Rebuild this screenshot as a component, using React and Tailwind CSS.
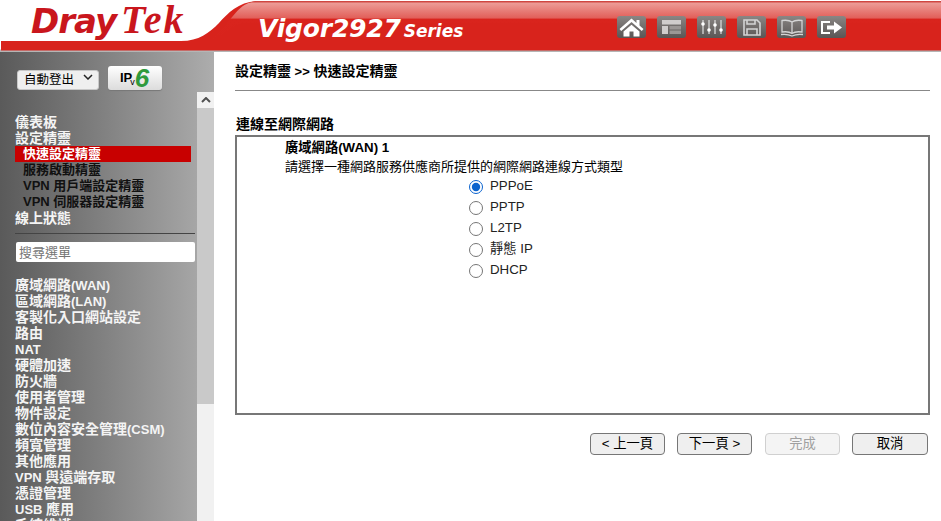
import React from 'react';

const topIcons = [
  // home
  <path key="h" fill="#fff" d="M14.500 2.500 2.500 13l1.700 1.900 10.300-9 10.300 9 1.700-1.900-4-3.500V4h-3v3zM6.500 15.500V20.500h6v-5h4v5h6v-5l-8-6.700z" />,
  // layout
  <g key="l">
    <path fill="#d0cdcc" d="M5 4h19v4.500H5zM5 10h6v8H5z" />
    <path fill="#9b9795" d="M12.500 10H24v3.500H12.500zM12.500 14.500H24V18H12.500z" />
  </g>,
  // sliders
  <g key="s" stroke="#d8d8d8" strokeWidth="1.300" fill="#fff">
    <path d="M6 4v14M12 4v14M18 4v14M24 4v14" />
    <circle cx="6" cy="8" r="1.800" stroke="none" />
    <circle cx="12" cy="14" r="1.800" stroke="none" />
    <circle cx="18" cy="9" r="1.800" stroke="none" />
    <circle cx="24" cy="14" r="1.800" stroke="none" />
  </g>,
  // save
  <g key="d" fill="none" stroke="#d4d4d4" strokeWidth="1.600">
    <path d="M7 4h13l3 3v12H7z" />
    <path d="M10 4v4h8V4M10 19v-6h10v6" />
  </g>,
  // book
  <g key="b" fill="none" stroke="#d4d4d4" strokeWidth="1.300">
    <path d="M15 6c-2-1.500-6-2-10-1.500V16c4-.5 8 0 10 1.500 2-1.500 6-2 10-1.500V4.500C21 4 17 4.500 15 6zM15 6v11.500" />
    <path d="M4 18.500c4-.5 8 0 11 1.500 3-1.500 7-2 11-1.500" />
  </g>,
  // logout
  <g key="o">
    <path fill="none" stroke="#fff" strokeWidth="2" d="M13 6H5v11h8" />
    <path fill="#fff" d="M10 9.500h7V5.500l8 6-8 6v-4h-7z" />
  </g>,
];

const wizardItems = ['服務啟動精靈', 'VPN 用戶端設定精靈', 'VPN 伺服器設定精靈'];
const menuItems = [
  '廣域網路(WAN)', '區域網路(LAN)', '客製化入口網站設定', '路由', 'NAT', '硬體加速', '防火牆', '使用者管理',
  '物件設定', '數位內容安全管理(CSM)', '頻寬管理', '其他應用', 'VPN 與遠端存取', '憑證管理', 'USB 應用', '系統維護',
];
const wanTypes = ['PPPoE', 'PPTP', 'L2TP', '靜態 IP', 'DHCP'];

// latin runs are a point smaller than the chinese next to them
const Mixed = ({ text }) =>
  text.split(/([\x20-\x7e]+)/).map((part, index) =>
    /[\x20-\x7e]/.test(part) ? <span key={index} className="text-[13px]">{part}</span> : part
  );

const Header = () => (
  <div className="relative h-[52px] shrink-0 bg-white">
    {/* red swoosh */}
    <svg className="absolute inset-0" width="941" height="52" viewBox="0 0 941 52">
      <defs>
        <linearGradient id="band" x1="0" y1="0" x2="0" y2="1">
          <stop offset="0" stopColor="#c8302b" />
          <stop offset="0.06" stopColor="#ec9a95" />
          <stop offset="0.42" stopColor="#e2605a" />
          <stop offset="0.46" stopColor="#d9241d" />
          <stop offset="1" stopColor="#d8231c" />
        </linearGradient>
      </defs>
      <path d="M0 49.500h941V52H0z" fill="#b5b5b5" />
      <path d="M1 41h180c18 0 28-8 38-18 9-10 21-22 40-22h682v49.500H1z" fill="#d8231c" />
      <path d="M205 41c8-3 15-10 22-18 9-10 15-22 32-22h682v22H245c-15 0-22 18-40 18z" fill="url(#band)" />
    </svg>
    <div className="relative flex h-full items-start">
      <div className="ml-[31px] flex w-[227px] items-baseline">
        <span className="text-[34px] leading-[40px] font-bold italic tracking-[-1px] text-[#c9161d] [font-family:'DejaVu_Sans',sans-serif]">Dray</span>
        <span className="ml-[5px] text-[40px] leading-[40px] font-bold italic tracking-[2px] text-[#c9161d] [font-family:'Liberation_Serif',serif]">Tek</span>
      </div>
      <div className="mt-[13px] flex w-[359px] items-baseline text-white italic font-bold [font-family:'DejaVu_Sans',sans-serif]">
        <span className="text-[25px] leading-[32px] tracking-[-0.2px]">Vigor2927</span>
        <span className="ml-[3px] text-[17px] leading-[32px]">Series</span>
      </div>
      <div className="mt-[16px] flex gap-[11px]">
        {topIcons.map((icon, index) => (
          <svg key={index} width="29" height="22" viewBox="0 0 29 22" className="rounded-[3px] bg-gradient-to-b from-[#8a8684] to-[#5a5655]">
            {icon}
          </svg>
        ))}
      </div>
    </div>
  </div>
);

const Sidebar = () => (
  <div className="flex w-[214px] shrink-0 flex-col bg-gradient-to-r from-[#5a5a5a] to-[#adadad]">
    <div className="flex h-[40px] shrink-0 items-start pt-[15px] pl-[17px]">
      <div className="relative h-[20px] w-[82px]">
        <select className="h-full w-full appearance-none rounded-[3px] border border-[#c8c8c8] bg-[#efefef] pl-[6px] text-[12.500px] text-black">
          <option>自動登出</option>
        </select>
        <svg className="pointer-events-none absolute top-[7px] right-[6px]" width="10" height="6" viewBox="0 0 10 6">
          <path d="M1 1l4 4 4-4" fill="none" stroke="#222" strokeWidth="1.500" />
        </svg>
      </div>
      <button className="ml-[9px] -mt-px flex h-[24px] w-[54px] items-center justify-start rounded-[3px] bg-gradient-to-b from-white to-[#dcdcdc] pl-[12px] text-[13px] font-bold text-black shadow-[0_1px_1px_#777]">
        <span>IP</span>
        <span className="-ml-[2px] mt-[9px] text-[9px] leading-none font-normal">v</span>
        <span className="text-[26px] leading-none italic text-[#2f9a3d]">6</span>
      </button>
    </div>
    <div className="flex min-h-0 flex-1">
      <div className="w-[197px] overflow-hidden pt-[22px] text-[14px] leading-[16px] font-bold text-[#f4f4f4]">
        <div className="pl-[15px]">儀表板</div>
        <div className="pl-[15px]">設定精靈</div>
        <div className="ml-[15px] w-[176px] bg-[#c80000] pl-[8px] text-[13px] text-white">快速設定精靈</div>
        {wizardItems.map((item) => (
          <div key={item} className="pl-[23px] text-[13px] text-[#111]">{item}</div>
        ))}
        <div className="pl-[15px]">線上狀態</div>
        <div className="mt-[7px] ml-[15px] h-px w-[180px] bg-[#444]" />
        <input
          className="mt-[8px] ml-[16px] block h-[20px] w-[179px] rounded-[2px] bg-white pl-[3px] text-[13px] font-normal placeholder:text-[#757575]"
          placeholder="搜尋選單"
        />
        <div className="mt-[15px] pl-[15px]">
          {menuItems.map((item) => (
            <div key={item} className="h-[16px] whitespace-nowrap"><Mixed text={item} /></div>
          ))}
        </div>
      </div>
      {/* scrollbar */}
      <div className="flex w-[17px] flex-col bg-[#f1f1f1]">
        <div className="flex h-[16px] items-center justify-center">
          <svg width="10" height="6" viewBox="0 0 10 6">
            <path d="M1 5l4-4 4 4" fill="none" stroke="#505050" strokeWidth="2" />
          </svg>
        </div>
        <div className="h-[296px] bg-[#c9c9c9]" />
      </div>
    </div>
  </div>
);

const WizardButton = ({ label, disabled, className }) => (
  <button
    disabled={disabled}
    className={`h-[22px] rounded-[4px] border text-[13.300px] leading-none ${
      disabled ? 'border-[#d0d0d0] bg-[#f4f4f4] text-[#a0a0a0]' : 'border-[#767676] bg-[#efefef] text-black'
    } ${className}`}
  >
    {label}
  </button>
);

const Content = () => (
  <div className="min-w-0 flex-1 pt-[8px] pr-[11px] pl-[21px] text-[#111]">
    <div className="flex h-[22px] items-center text-[14px] font-bold text-black">
      <span className="whitespace-pre"><Mixed text="設定精靈 >> 快速設定精靈" /></span>
    </div>
    <div className="mt-[8px] h-px w-[695px] bg-[#888]" />
    <div className="mt-[25px] pl-px text-[14px] leading-[16px] font-bold text-black">連線至網際網路</div>
    <div className="mt-[3px] h-[280px] w-[695px] border-2 border-[#777] pl-[48px]">
      <div className="pt-[3px] text-[13.300px] leading-[16px] font-bold text-black">廣域網路(WAN) 1</div>
      <div className="pt-[3px] text-[13px] leading-[16px] text-black">請選擇一種網路服務供應商所提供的網際網路連線方式類型</div>
      <div className="ml-[184px] flex flex-col pt-[1px]">
        {wanTypes.map((type, index) => (
          <label key={type} className="flex h-[21px] items-center text-[13.300px] text-[#222]">
            <input type="radio" name="wan" defaultChecked={index === 0} className="m-0 h-[14px] w-[14px] accent-[#0b63ce]" />
            <span className="-mt-[2px] ml-[7px]">{type}</span>
          </label>
        ))}
      </div>
    </div>
    <div className="mt-[18px] flex w-[693px] justify-end">
      <WizardButton label="< 上一頁" className="w-[75px]" />
      <WizardButton label="下一頁 >" className="ml-[12px] w-[75px]" />
      <WizardButton label="完成" disabled className="ml-[13px] w-[75px]" />
      <WizardButton label="取消" className="ml-[12px] w-[76px]" />
    </div>
  </div>
);

export default function App() {
  return (
    <div className="flex h-[521px] w-[941px] flex-col overflow-hidden bg-white [font-family:'Liberation_Sans','Noto_Sans_CJK_TC',sans-serif]">
      <Header />
      <div className="flex min-h-0 flex-1">
        <Sidebar />
        <Content />
      </div>
    </div>
  );
}
